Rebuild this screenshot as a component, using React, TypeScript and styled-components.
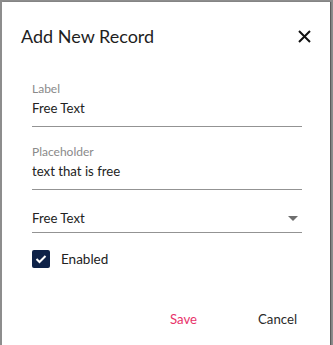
import React from 'react'
import styled, { createGlobalStyle } from 'styled-components'

const GlobalStyle = createGlobalStyle`
  html, body {
    margin: 0;
    padding: 0;
    background: #8d8d8d;
  }
  body {
    font-family: Lato, 'Open Sans', sans-serif;
  }
`

const Backdrop = styled.div`
  width: 333px;
  height: 345px;
  padding: 2px 3px 0 2px;
  box-sizing: border-box;
  display: flex;
`

const Dialog = styled.div`
  flex: 1;
  background: #fff;
  display: flex;
  flex-direction: column;
  box-shadow: 1px 0 1px rgba(0, 0, 0, 0.35);
`

const TitleBar = styled.div`
  display: flex;
  align-items: center;
  justify-content: space-between;
  padding: 20px 19px 0 19px;
  height: 28px;
`

const Title = styled.h2`
  margin: 0;
  font-size: 18px;
  font-weight: 400;
  color: #1e1e1e;
  line-height: 28px;
`

const CloseButton = styled.button`
  border: 0;
  background: none;
  padding: 0;
  width: 14px;
  height: 14px;
  display: flex;
  align-items: center;
  justify-content: center;
  cursor: pointer;
`

const Content = styled.div`
  display: flex;
  flex-direction: column;
  padding: 31px 28px 0 30px;
`

const Field = styled.div`
  display: flex;
  flex-direction: column;
  border-bottom: 1px solid #939393;
  padding-bottom: 7px;
  margin-bottom: 17px;
`

const FieldLabel = styled.label`
  font-size: 12px;
  line-height: 16px;
  color: #8a8a8a;
`

const FieldValue = styled.div`
  font-size: 13.2px;
  line-height: 22px;
  color: #222;
`

const SelectRow = styled.div`
  display: flex;
  align-items: center;
  justify-content: space-between;
  border-bottom: 1px solid #939393;
  padding-bottom: 3px;
  font-size: 13.2px;
  line-height: 22px;
  color: #222;
`

const Caret = styled.span`
  width: 0;
  height: 0;
  border-left: 5px solid transparent;
  border-right: 5px solid transparent;
  border-top: 5px solid #6e6e6e;
  margin-right: 4px;
`

const CheckRow = styled.label`
  display: flex;
  align-items: center;
  gap: 11px;
  margin-top: 17px;
  font-size: 13.5px;
  color: #222;
`

const Box = styled.span`
  width: 18px;
  height: 18px;
  border-radius: 2px;
  background: #0e2248;
  display: flex;
  align-items: center;
  justify-content: center;
`

const Actions = styled.div`
  margin-top: auto;
  display: flex;
  justify-content: flex-end;
  align-items: center;
  gap: 61px;
  padding: 0 33px 16px 0;
`

const ActionButton = styled.button<{ $primary?: boolean }>`
  border: 0;
  background: none;
  padding: 0;
  font-family: inherit;
  font-size: 13.2px;
  line-height: 20px;
  color: ${(p) => (p.$primary ? '#e8336a' : '#2a2a2a')};
  cursor: pointer;
`

export default function App() {
  return (
    <>
      <GlobalStyle />
      <Backdrop>
        <Dialog>
          <TitleBar>
            <Title>Add New Record</Title>
            <CloseButton aria-label="close">
              <svg width="13" height="13" viewBox="0 0 13 13">
                <path d="M1 1 L12 12 M12 1 L1 12" stroke="#111" strokeWidth="2" />
              </svg>
            </CloseButton>
          </TitleBar>
          <Content>
            <Field>
              <FieldLabel>Label</FieldLabel>
              <FieldValue>Free Text</FieldValue>
            </Field>
            <Field>
              <FieldLabel>Placeholder</FieldLabel>
              <FieldValue>text that is free</FieldValue>
            </Field>
            <SelectRow>
              <span>Free Text</span>
              <Caret />
            </SelectRow>
            <CheckRow>
              <Box>
                <svg width="12" height="10" viewBox="0 0 12 10">
                  <path d="M1.5 5 L4.5 8 L10.5 2" stroke="#fff" strokeWidth="2" fill="none" />
                </svg>
              </Box>
              Enabled
            </CheckRow>
          </Content>
          <Actions>
            <ActionButton $primary>Save</ActionButton>
            <ActionButton>Cancel</ActionButton>
          </Actions>
        </Dialog>
      </Backdrop>
    </>
  )
}
